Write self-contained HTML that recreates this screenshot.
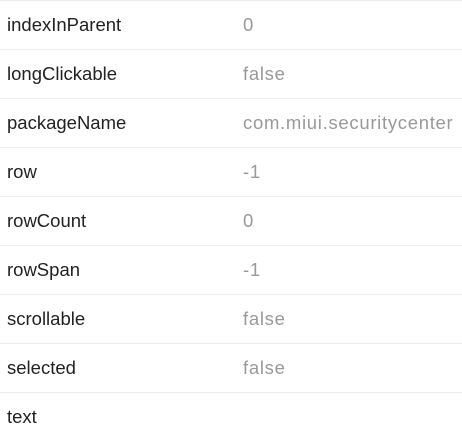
<html><head><style>
body{margin:0;width:462px;height:433px;background:#fff;font-family:"Liberation Sans",sans-serif;overflow:hidden}
.r{height:48px;border-top:1.5px solid #ededed;position:relative;font-size:18.5px;line-height:48px}
.k{position:absolute;left:7px;color:#222}
.v{position:absolute;left:243px;color:#999;letter-spacing:0.7px}
</style></head><body>
<div class="r"><span class="k">indexInParent</span><span class="v">0</span></div>
<div class="r"><span class="k">longClickable</span><span class="v">false</span></div>
<div class="r"><span class="k">packageName</span><span class="v">com.miui.securitycenter</span></div>
<div class="r"><span class="k">row</span><span class="v">-1</span></div>
<div class="r"><span class="k">rowCount</span><span class="v">0</span></div>
<div class="r"><span class="k">rowSpan</span><span class="v">-1</span></div>
<div class="r"><span class="k">scrollable</span><span class="v">false</span></div>
<div class="r"><span class="k">selected</span><span class="v">false</span></div>
<div class="r"><span class="k">text</span><span class="v"></span></div>
</body></html>
